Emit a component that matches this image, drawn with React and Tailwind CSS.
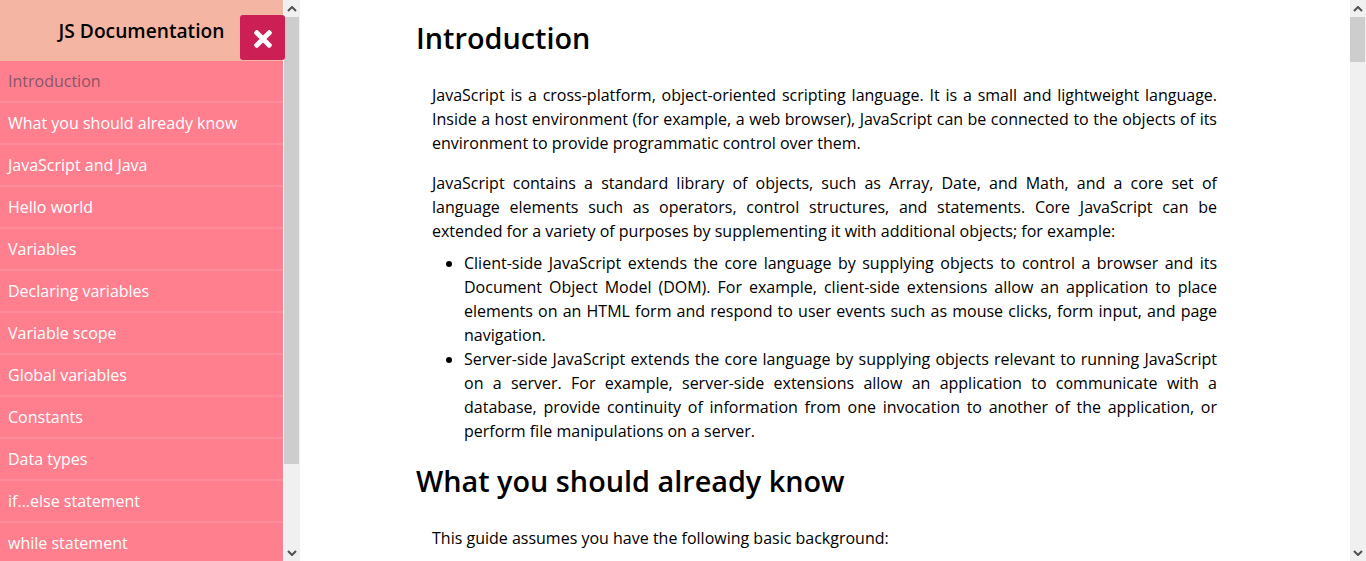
import React from 'react';
import { FaTimes } from 'react-icons/fa';

const links = [
  'Introduction',
  'What you should already know',
  'JavaScript and Java',
  'Hello world',
  'Variables',
  'Declaring variables',
  'Variable scope',
  'Global variables',
  'Constants',
  'Data types',
  'if...else statement',
  'while statement',
];

function Chevron({ down }) {
  return (
    <svg width="10" height="6" viewBox="0 0 10 6" className="block">
      <path
        d={down ? 'M1 1 L5 5 L9 1' : 'M1 5 L5 1 L9 5'}
        fill="none"
        stroke="#505050"
        strokeWidth="2"
      />
    </svg>
  );
}

function Scrollbar({ thumbClass }) {
  return (
    <div className="w-4 h-full shrink-0 flex flex-col bg-[#f0f0f0]">
      <div className="h-[17px] shrink-0 flex items-center justify-center">
        <Chevron />
      </div>
      <div className="flex-1 min-h-0">
        <div className={thumbClass} />
      </div>
      <div className="h-[17px] shrink-0 flex items-center justify-center">
        <Chevron down />
      </div>
    </div>
  );
}

export default function App() {
  return (
    <div className="relative flex h-[561px] w-[1366px] overflow-hidden bg-white text-black font-['Open_Sans',sans-serif] text-base leading-6">
      {/* Sidebar */}
      <aside className="w-[300px] h-full shrink-0 flex">
        <div className="w-[283px] h-full shrink-0 overflow-hidden">
          <header className="h-[61px] bg-[#f4b6a3] pt-[19px] text-center">
            <h2 className="text-[19.2px] font-semibold leading-6">JS Documentation</h2>
          </header>
          <nav>
            {links.map((link, i) => (
              <a
                key={link}
                href="#"
                className={`block h-[42px] pl-2 pt-2 bg-[#ff7f8f] border-b-2 border-[#ff8c9a] ${
                  i === 0 ? 'text-[#8b5566]' : 'text-white'
                }`}
              >
                {link}
              </a>
            ))}
          </nav>
        </div>
        <div className="w-px shrink-0" />
        <Scrollbar thumbClass="w-[15px] h-[447px] bg-[#cdcdcd]" />
      </aside>

      {/* Close button */}
      <button className="absolute left-[240px] top-[15px] w-[45px] h-[45px] pt-[3px] rounded-[3px] bg-[#cc1f56] text-white flex items-center justify-center">
        <FaTimes className="w-[26px] h-[26px]" />
      </button>

      {/* Main content */}
      <main className="flex-1 min-w-0 h-full overflow-hidden pl-[116px] pr-[133px] pt-[15px]">
        <section>
          <h1 className="text-[28.8px] leading-[45px] font-semibold">Introduction</h1>
          <div className="pl-4 pt-[23px] text-justify">
            <p className="mb-4">
              JavaScript is a cross-platform, object-oriented scripting language. It is a small and
              lightweight language. Inside a host environment (for example, a web browser),
              JavaScript can be connected to the objects of its environment to provide programmatic
              control over them.
            </p>
            <p className="mb-2">
              JavaScript contains a standard library of objects, such as Array, Date, and Math, and
              a core set of language elements such as operators, control structures, and statements.
              Core JavaScript can be extended for a variety of purposes by supplementing it with
              additional objects; for example:
            </p>
            <ul className="list-disc pl-8 mb-[15px]">
              <li>
                Client-side JavaScript extends the core language by supplying objects to control a
                browser and its Document Object Model (DOM). For example, client-side extensions
                allow an application to place elements on an HTML form and respond to user events
                such as mouse clicks, form input, and page navigation.
              </li>
              <li>
                Server-side JavaScript extends the core language by supplying objects relevant to
                running JavaScript on a server. For example, server-side extensions allow an
                application to communicate with a database, provide continuity of information from
                one invocation to another of the application, or perform file manipulations on a
                server.
              </li>
            </ul>
          </div>
        </section>
        <section>
          <h1 className="text-[28.8px] leading-[45px] font-semibold">What you should already know</h1>
          <div className="pl-4 pt-[23px] text-justify">
            <p>This guide assumes you have the following basic background:</p>
          </div>
        </section>
      </main>

      <Scrollbar thumbClass="w-[15px] h-[45px] bg-[#cdcdcd]" />
    </div>
  );
}
